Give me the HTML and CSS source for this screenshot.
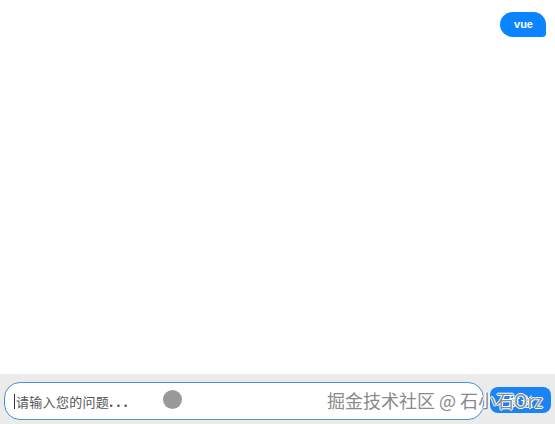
FILE: index.html
```html
<!DOCTYPE html>
<html lang="zh">
<head>
<meta charset="utf-8">
<link rel="stylesheet" href="styles.css">
</head>
<body>
<div class="app">
  <div class="messages">
    <div class="msg-row user">
      <div class="bubble">vue</div>
    </div>
  </div>
  <div class="composer">
    <div class="input-box">
      <span class="caret"></span>
      <span class="placeholder">请输入您的问题<span class="dots">...</span></span>
    </div>
    <button class="send">发送</button>
    <span class="touch-dot"></span>
    <span class="watermark">掘金技术社区 @ 石小石Orz</span>
  </div>
</div>
</body>
</html>
```
FILE: styles.css
```css
* { box-sizing: border-box; }
html, body { margin: 0; padding: 0; height: 100%; background: #fff; }
body { font-family: "Noto Sans CJK SC", "Liberation Sans", sans-serif; }
.app { display: flex; flex-direction: column; height: 424px; width: 555px; }
.messages { flex: 1; padding: 12px 9px 0 0; display: flex; flex-direction: column; }
.msg-row.user { display: flex; justify-content: flex-end; }
.bubble {
  background: #0a84ff; color: #fff;
  font-family: "Liberation Sans", sans-serif; font-size: 11px; font-weight: bold;
  height: 25px; line-height: 25px; padding: 0 13px 0 14px;
  border-radius: 13px 13px 4px 13px;
}
.composer {
  position: relative; height: 50px; background: #ebebeb;
  display: flex; align-items: center; padding: 0 4px 0 4px; gap: 6px;
}
.input-box {
  width: 480px; height: 38px; margin-top: 4px;
  background: #fff; border: 1px solid #4a8fd9; border-radius: 16px;
  display: flex; align-items: center; padding-left: 9px;
}
.caret { width: 1px; height: 15px; background: #333; margin-right: 1px; }
.placeholder { font-size: 13px; color: #555; letter-spacing: 0.3px; }
.dots { letter-spacing: 3px; font-weight: bold; }
.send {
  width: 61px; height: 26px; margin-top: 2px; border: none; border-radius: 8px;
  background: #1a84f5; color: #fff; font-size: 13px;
  font-family: "Noto Sans CJK SC", sans-serif; padding: 0;
}
.touch-dot {
  position: absolute; left: 163px; top: 16px; width: 19px; height: 19px;
  border-radius: 50%; background: #999;
}
.watermark {
  position: absolute; left: 327px; top: 14px; font-size: 18px; color: #8a8a8a;
  font-family: "Noto Sans CJK SC", sans-serif; line-height: 24px;
  text-shadow: 1px 0 0 #fff, -1px 0 0 #fff, 0 1px 0 #fff, 0 -1px 0 #fff;
  white-space: nowrap;
}
```
